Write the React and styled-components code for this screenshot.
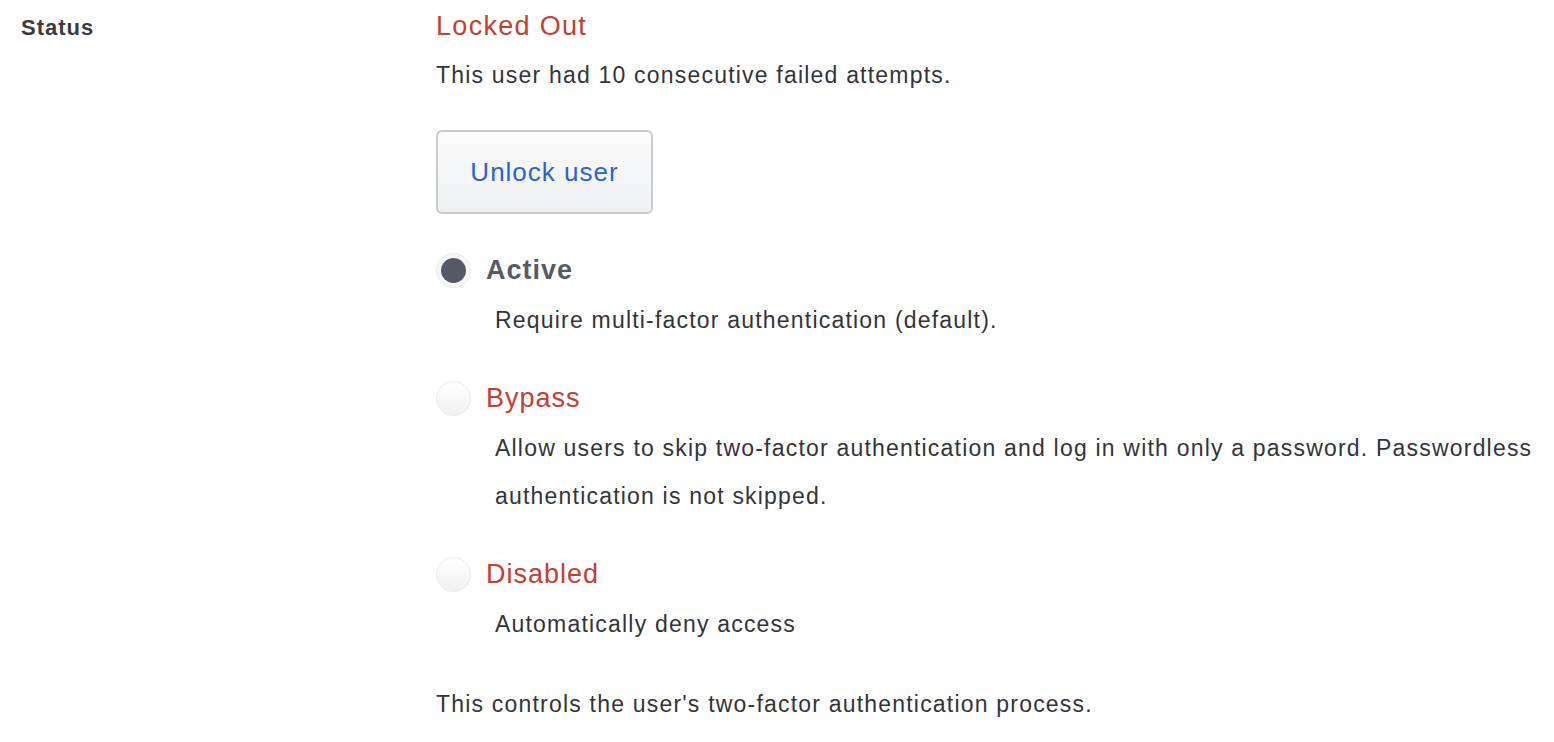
import styled, { createGlobalStyle } from "styled-components";

const GlobalStyle = createGlobalStyle`
  body {
    margin: 0;
    background: #ffffff;
    font-family: "Liberation Sans", Arial, sans-serif;
    color: #333438;
  }
`;

const Row = styled.div`
  display: grid;
  grid-template-columns: 415px 1fr;
  padding: 8px 0 0 21px;
`;

const Label = styled.div`
  font-size: 22px;
  font-weight: bold;
  letter-spacing: 1px;
  color: #3a3b3f;
  padding-top: 7px;
`;

const Content = styled.div`
  display: flex;
  flex-direction: column;
  align-items: flex-start;
`;

const StatusTitle = styled.div`
  font-size: 27px;
  line-height: 36px;
  letter-spacing: 1.3px;
  color: #c4402f;
`;

const Text = styled.div`
  font-size: 23px;
  line-height: 48px;
  letter-spacing: 1.2px;
  color: #333438;
  margin-top: ${(p) => p.top || 0}px;
`;

const UnlockButton = styled.button`
  margin-top: 31px;
  width: 217px;
  height: 84px;
  border: 2px solid #c8cacd;
  border-radius: 6px;
  background: linear-gradient(#fcfcfc, #eef0f2);
  font-family: "Liberation Sans", Arial, sans-serif;
  font-size: 26px;
  letter-spacing: 1px;
  color: #2a62d8;
  cursor: pointer;
`;

const Options = styled.div`
  display: flex;
  flex-direction: column;
  gap: 36px;
  margin-top: 38px;
`;

const Option = styled.div`
  display: flex;
  flex-direction: column;
`;

const OptionHead = styled.label`
  display: flex;
  align-items: center;
  gap: 15px;
  height: 36px;
`;

const Radio = styled.span`
  width: 35px;
  height: 35px;
  border-radius: 50%;
  box-sizing: border-box;
  border: 1px solid #ececee;
  background: ${(p) => (p.checked ? "#f6f6f7" : "linear-gradient(#ffffff, #f1f1f2)")};
  display: flex;
  align-items: center;
  justify-content: center;
  &::after {
    content: "";
    display: ${(p) => (p.checked ? "block" : "none")};
    width: 25px;
    height: 25px;
    border-radius: 50%;
    background: #545a65;
  }
`;

const OptionName = styled.span`
  font-size: 27px;
  letter-spacing: 1px;
  font-weight: ${(p) => (p.active ? "bold" : "normal")};
  color: ${(p) => (p.active ? "#555b66" : "#c4402f")};
`;

const OptionDesc = styled.div`
  padding-left: 59px;
  font-size: 23px;
  line-height: 48px;
  letter-spacing: 1.2px;
  color: #333438;
  max-width: 1050px;
  margin-top: 8px;
`;

const options = [
  { id: "active", name: "Active", desc: "Require multi-factor authentication (default).", checked: true },
  {
    id: "bypass",
    name: "Bypass",
    desc: "Allow users to skip two-factor authentication and log in with only a password. Passwordless authentication is not skipped.",
  },
  { id: "disabled", name: "Disabled", desc: "Automatically deny access" },
];

const App = () => {
  return (
    <>
      <GlobalStyle />
      <Row>
        <Label>Status</Label>
        <Content>
          <StatusTitle>Locked Out</StatusTitle>
          <Text top={7}>This user had 10 consecutive failed attempts.</Text>
          <UnlockButton>Unlock user</UnlockButton>
          <Options>
            {options.map((o) => (
              <Option key={o.id}>
                <OptionHead>
                  <Radio checked={o.checked} />
                  <OptionName active={o.checked}>{o.name}</OptionName>
                </OptionHead>
                <OptionDesc>{o.desc}</OptionDesc>
              </Option>
            ))}
          </Options>
          <Text top={32}>This controls the user's two-factor authentication process.</Text>
        </Content>
      </Row>
    </>
  );
};

export default App;
